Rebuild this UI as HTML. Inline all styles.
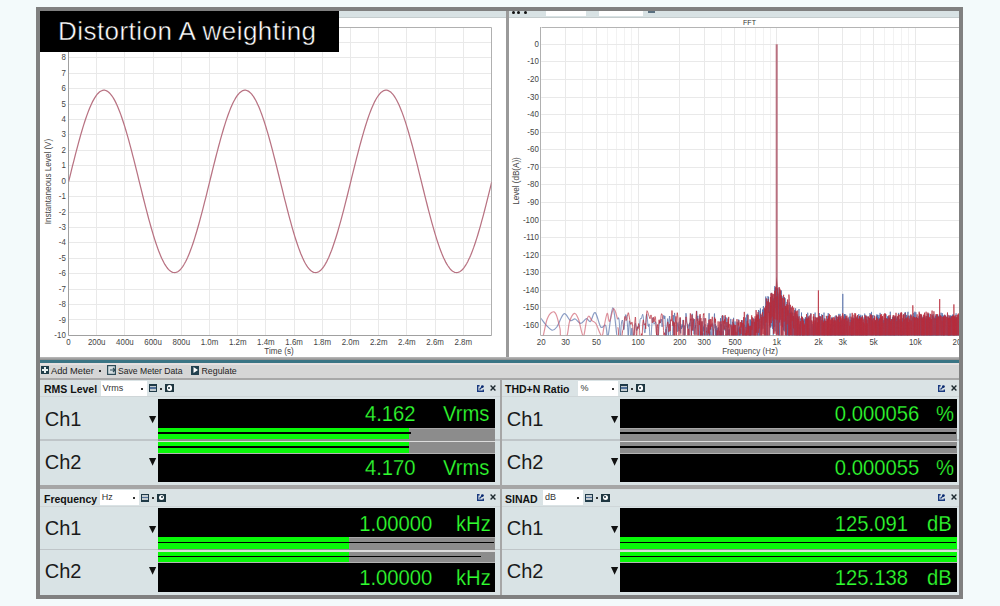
<!DOCTYPE html>
<html><head><meta charset="utf-8"><style>
html,body{margin:0;padding:0}
body{width:1000px;height:606px;position:relative;overflow:hidden;background:#f3fafb;font-family:'Liberation Sans', sans-serif}
.a{position:absolute}
</style></head><body>
<div class="a" style="left:36px;top:7px;width:927px;height:592px;background:#808080"></div>
<div class="a" style="left:40px;top:11px;width:919px;height:6px;background:#d8e2e4"></div>
<div class="a" style="left:40px;top:17px;width:919px;height:1px;background:#c4cccd"></div>
<div class="a" style="left:40px;top:18px;width:466px;height:339px;background:#fff"></div>
<div class="a" style="left:506px;top:11px;width:3px;height:346px;background:#9a9a9a"></div>
<div class="a" style="left:509px;top:18px;width:450px;height:339px;background:#fff"></div>
<div class="a" style="left:512.2px;top:10.5px;width:3px;height:3px;border-radius:50%;background:#111"></div>
<div class="a" style="left:517.2px;top:10.5px;width:3px;height:3px;border-radius:50%;background:#111"></div>
<div class="a" style="left:524px;top:10.5px;width:3px;height:3px;border-radius:50%;background:#111"></div>
<div class="a" style="left:546px;top:11px;width:40px;height:5px;background:#fff"></div>
<div class="a" style="left:598.5px;top:11px;width:44px;height:5px;background:#fff"></div>
<div class="a" style="left:648px;top:11px;width:7px;height:2px;background:#5a7080"></div>
<svg class="a" style="left:0;top:0" width="1000" height="606" viewBox="0 0 1000 606">
<defs><clipPath id="cl"><rect x="68.5" y="27.0" width="423.0" height="308.4"/></clipPath>
<clipPath id="cr"><rect x="541.2" y="27.3" width="417.79999999999995" height="308.0"/></clipPath>
<clipPath id="cpr"><rect x="509" y="18" width="450" height="339"/></clipPath></defs>
<path d="M96.5 27.0V335.4M124.5 27.0V335.4M153.5 27.0V335.4M181.5 27.0V335.4M209.5 27.0V335.4M237.5 27.0V335.4M265.5 27.0V335.4M294.5 27.0V335.4M322.5 27.0V335.4M350.5 27.0V335.4M378.5 27.0V335.4M406.5 27.0V335.4M435.5 27.0V335.4M463.5 27.0V335.4M68.5 319.5H491.5M68.5 304.5H491.5M68.5 289.5H491.5M68.5 273.5H491.5M68.5 258.5H491.5M68.5 242.5H491.5M68.5 227.5H491.5M68.5 212.5H491.5M68.5 196.5H491.5M68.5 181.5H491.5M68.5 165.5H491.5M68.5 150.5H491.5M68.5 134.5H491.5M68.5 119.5H491.5M68.5 104.5H491.5M68.5 88.5H491.5M68.5 73.5H491.5M68.5 57.5H491.5M68.5 42.5H491.5" stroke="#e9e9e9" stroke-width="1" fill="none"/><path d="M68.5 27.5H491.5V335.5" fill="none" stroke="#b0b0b0" stroke-width="1"/><path d="M68.5 27V335.5H491.5" fill="none" stroke="#a0a0a0" stroke-width="1"/><g font-family="'Liberation Sans', sans-serif" font-size="9" fill="#444"><text transform="translate(65.8 337.9) scale(0.88 1)" text-anchor="end">-10</text><text transform="translate(65.8 322.5) scale(0.88 1)" text-anchor="end">-9</text><text transform="translate(65.8 307.1) scale(0.88 1)" text-anchor="end">-8</text><text transform="translate(65.8 291.6) scale(0.88 1)" text-anchor="end">-7</text><text transform="translate(65.8 276.2) scale(0.88 1)" text-anchor="end">-6</text><text transform="translate(65.8 260.8) scale(0.88 1)" text-anchor="end">-5</text><text transform="translate(65.8 245.4) scale(0.88 1)" text-anchor="end">-4</text><text transform="translate(65.8 230) scale(0.88 1)" text-anchor="end">-3</text><text transform="translate(65.8 214.5) scale(0.88 1)" text-anchor="end">-2</text><text transform="translate(65.8 199.1) scale(0.88 1)" text-anchor="end">-1</text><text transform="translate(65.8 183.7) scale(0.88 1)" text-anchor="end">0</text><text transform="translate(65.8 168.3) scale(0.88 1)" text-anchor="end">1</text><text transform="translate(65.8 152.9) scale(0.88 1)" text-anchor="end">2</text><text transform="translate(65.8 137.4) scale(0.88 1)" text-anchor="end">3</text><text transform="translate(65.8 122) scale(0.88 1)" text-anchor="end">4</text><text transform="translate(65.8 106.6) scale(0.88 1)" text-anchor="end">5</text><text transform="translate(65.8 91.2) scale(0.88 1)" text-anchor="end">6</text><text transform="translate(65.8 75.8) scale(0.88 1)" text-anchor="end">7</text><text transform="translate(65.8 60.3) scale(0.88 1)" text-anchor="end">8</text><text transform="translate(68.5 344.9) scale(0.88 1)" text-anchor="middle">0</text><text transform="translate(96.7 344.9) scale(0.88 1)" text-anchor="middle">200u</text><text transform="translate(124.9 344.9) scale(0.88 1)" text-anchor="middle">400u</text><text transform="translate(153.1 344.9) scale(0.88 1)" text-anchor="middle">600u</text><text transform="translate(181.3 344.9) scale(0.88 1)" text-anchor="middle">800u</text><text transform="translate(209.5 344.9) scale(0.88 1)" text-anchor="middle">1.0m</text><text transform="translate(237.7 344.9) scale(0.88 1)" text-anchor="middle">1.2m</text><text transform="translate(265.9 344.9) scale(0.88 1)" text-anchor="middle">1.4m</text><text transform="translate(294.1 344.9) scale(0.88 1)" text-anchor="middle">1.6m</text><text transform="translate(322.3 344.9) scale(0.88 1)" text-anchor="middle">1.8m</text><text transform="translate(350.5 344.9) scale(0.88 1)" text-anchor="middle">2.0m</text><text transform="translate(378.7 344.9) scale(0.88 1)" text-anchor="middle">2.2m</text><text transform="translate(406.9 344.9) scale(0.88 1)" text-anchor="middle">2.4m</text><text transform="translate(435.1 344.9) scale(0.88 1)" text-anchor="middle">2.6m</text><text transform="translate(463.3 344.9) scale(0.88 1)" text-anchor="middle">2.8m</text><text transform="translate(279 353.5) scale(0.9 1)" text-anchor="middle">Time (s)</text><text transform="translate(50.8 181.5) rotate(-90) scale(0.9 1)" text-anchor="middle">Instantaneous Level (V)</text></g>
<g clip-path="url(#cl)"><polyline points="68.7,181.4 69.7,177.3 70.7,173.3 71.7,169.2 72.7,165.2 73.7,161.3 74.7,157.3 75.7,153.4 76.7,149.6 77.7,145.8 78.7,142.1 79.7,138.5 80.7,134.9 81.7,131.5 82.7,128.1 83.7,124.9 84.7,121.8 85.7,118.8 86.7,115.9 87.7,113.1 88.7,110.5 89.7,108 90.7,105.7 91.7,103.5 92.7,101.4 93.7,99.6 94.7,97.9 95.7,96.3 96.7,94.9 97.7,93.7 98.7,92.7 99.7,91.8 100.7,91.2 101.7,90.7 102.7,90.3 103.7,90.2 104.7,90.2 105.7,90.5 106.7,90.9 107.7,91.5 108.7,92.2 109.7,93.2 110.7,94.3 111.7,95.6 112.7,97 113.7,98.6 114.7,100.4 115.7,102.4 116.7,104.5 117.7,106.8 118.7,109.2 119.7,111.7 120.7,114.4 121.7,117.2 122.7,120.2 123.7,123.2 124.7,126.4 125.7,129.7 126.7,133.1 127.7,136.6 128.7,140.2 129.7,143.9 130.7,147.6 131.7,151.4 132.7,155.3 133.7,159.2 134.7,163.1 135.7,167.1 136.7,171.2 137.7,175.2 138.7,179.3 139.7,183.3 140.7,187.4 141.7,191.4 142.7,195.5 143.7,199.5 144.7,203.4 145.7,207.3 146.7,211.2 147.7,215 148.7,218.8 149.7,222.4 150.7,226 151.7,229.5 152.7,232.9 153.7,236.2 154.7,239.4 155.7,242.5 156.7,245.4 157.7,248.3 158.7,251 159.7,253.5 160.7,255.9 161.7,258.2 162.7,260.3 163.7,262.3 164.7,264.1 165.7,265.7 166.7,267.2 167.7,268.5 168.7,269.6 169.7,270.5 170.7,271.3 171.7,271.9 172.7,272.3 173.7,272.5 174.7,272.6 175.7,272.5 176.7,272.2 177.7,271.7 178.7,271 179.7,270.2 180.7,269.1 181.7,267.9 182.7,266.6 183.7,265 184.7,263.3 185.7,261.5 186.7,259.4 187.7,257.3 188.7,254.9 189.7,252.4 190.7,249.8 191.7,247.1 192.7,244.2 193.7,241.2 194.7,238.1 195.7,234.8 196.7,231.5 197.7,228 198.7,224.5 199.7,220.9 200.7,217.2 201.7,213.4 202.7,209.6 203.7,205.7 204.7,201.7 205.7,197.8 206.7,193.8 207.7,189.7 208.7,185.7 209.7,181.6 210.7,177.5 211.7,173.5 212.7,169.4 213.7,165.4 214.7,161.5 215.7,157.5 216.7,153.6 217.7,149.8 218.7,146 219.7,142.3 220.7,138.7 221.7,135.1 222.7,131.7 223.7,128.3 224.7,125.1 225.7,121.9 226.7,118.9 227.7,116 228.7,113.2 229.7,110.6 230.7,108.1 231.7,105.8 232.7,103.6 233.7,101.5 234.7,99.7 235.7,97.9 236.7,96.4 237.7,95 238.7,93.8 239.7,92.7 240.7,91.9 241.7,91.2 242.7,90.7 243.7,90.4 244.7,90.2 245.7,90.2 246.7,90.5 247.7,90.9 248.7,91.4 249.7,92.2 250.7,93.1 251.7,94.2 252.7,95.5 253.7,96.9 254.7,98.6 255.7,100.3 256.7,102.3 257.7,104.4 258.7,106.6 259.7,109 260.7,111.6 261.7,114.3 262.7,117.1 263.7,120 264.7,123.1 265.7,126.3 266.7,129.6 267.7,132.9 268.7,136.4 269.7,140 270.7,143.7 271.7,147.4 272.7,151.2 273.7,155.1 274.7,159 275.7,162.9 276.7,166.9 277.7,171 278.7,175 279.7,179.1 280.7,183.1 281.7,187.2 282.7,191.2 283.7,195.3 284.7,199.3 285.7,203.2 286.7,207.1 287.7,211 288.7,214.8 289.7,218.6 290.7,222.2 291.7,225.8 292.7,229.3 293.7,232.7 294.7,236.1 295.7,239.2 296.7,242.3 297.7,245.3 298.7,248.1 299.7,250.8 300.7,253.4 301.7,255.8 302.7,258.1 303.7,260.2 304.7,262.2 305.7,264 306.7,265.6 307.7,267.1 308.7,268.4 309.7,269.5 310.7,270.5 311.7,271.3 312.7,271.9 313.7,272.3 314.7,272.5 315.7,272.6 316.7,272.5 317.7,272.2 318.7,271.7 319.7,271 320.7,270.2 321.7,269.2 322.7,268 323.7,266.6 324.7,265.1 325.7,263.4 326.7,261.6 327.7,259.5 328.7,257.4 329.7,255 330.7,252.6 331.7,250 332.7,247.2 333.7,244.3 334.7,241.3 335.7,238.2 336.7,235 337.7,231.7 338.7,228.2 339.7,224.7 340.7,221.1 341.7,217.4 342.7,213.6 343.7,209.8 344.7,205.9 345.7,201.9 346.7,198 347.7,194 348.7,189.9 349.7,185.9 350.7,181.8 351.7,177.7 352.7,173.7 353.7,169.7 354.7,165.6 355.7,161.7 356.7,157.7 357.7,153.8 358.7,150 359.7,146.2 360.7,142.5 361.7,138.8 362.7,135.3 363.7,131.8 364.7,128.5 365.7,125.2 366.7,122.1 367.7,119 368.7,116.1 369.7,113.4 370.7,110.7 371.7,108.2 372.7,105.9 373.7,103.7 374.7,101.6 375.7,99.7 376.7,98 377.7,96.5 378.7,95.1 379.7,93.8 380.7,92.8 381.7,91.9 382.7,91.2 383.7,90.7 384.7,90.4 385.7,90.2 386.7,90.2 387.7,90.4 388.7,90.8 389.7,91.4 390.7,92.1 391.7,93.1 392.7,94.2 393.7,95.4 394.7,96.9 395.7,98.5 396.7,100.2 397.7,102.2 398.7,104.3 399.7,106.5 400.7,108.9 401.7,111.4 402.7,114.1 403.7,116.9 404.7,119.9 405.7,122.9 406.7,126.1 407.7,129.4 408.7,132.8 409.7,136.3 410.7,139.8 411.7,143.5 412.7,147.2 413.7,151 414.7,154.9 415.7,158.8 416.7,162.7 417.7,166.7 418.7,170.8 419.7,174.8 420.7,178.9 421.7,182.9 422.7,187 423.7,191 424.7,195.1 425.7,199.1 426.7,203 427.7,207 428.7,210.8 429.7,214.6 430.7,218.4 431.7,222.1 432.7,225.7 433.7,229.2 434.7,232.6 435.7,235.9 436.7,239.1 437.7,242.2 438.7,245.1 439.7,248 440.7,250.7 441.7,253.3 442.7,255.7 443.7,258 444.7,260.1 445.7,262.1 446.7,263.9 447.7,265.5 448.7,267 449.7,268.3 450.7,269.5 451.7,270.4 452.7,271.2 453.7,271.8 454.7,272.3 455.7,272.5 456.7,272.6 457.7,272.5 458.7,272.2 459.7,271.7 460.7,271.1 461.7,270.2 462.7,269.2 463.7,268.1 464.7,266.7 465.7,265.2 466.7,263.5 467.7,261.7 468.7,259.6 469.7,257.5 470.7,255.2 471.7,252.7 472.7,250.1 473.7,247.4 474.7,244.5 475.7,241.5 476.7,238.4 477.7,235.2 478.7,231.8 479.7,228.4 480.7,224.9 481.7,221.2 482.7,217.6 483.7,213.8 484.7,210 485.7,206.1 486.7,202.1 487.7,198.2 488.7,194.2 489.7,190.1 490.7,186.1 491.7,182" fill="none" stroke="#b87282" stroke-width="1.25"/></g>
<g clip-path="url(#cpr)"><path d="M582.5 27.3V335.3M607.5 27.3V335.3M616.5 27.3V335.3M624.5 27.3V335.3M631.5 27.3V335.3M721.5 27.3V335.3M745.5 27.3V335.3M755.5 27.3V335.3M763.5 27.3V335.3M770.5 27.3V335.3M860.5 27.3V335.3M884.5 27.3V335.3M893.5 27.3V335.3M901.5 27.3V335.3M908.5 27.3V335.3" stroke="#f2f2f2" stroke-width="1" fill="none"/><path d="M565.5 27.3V335.3M596.5 27.3V335.3M638.5 27.3V335.3M679.5 27.3V335.3M704.5 27.3V335.3M734.5 27.3V335.3M776.5 27.3V335.3M818.5 27.3V335.3M842.5 27.3V335.3M873.5 27.3V335.3M915.5 27.3V335.3M541.2 44.5H970M541.2 61.5H970M541.2 79.5H970M541.2 97.5H970M541.2 114.5H970M541.2 132.5H970M541.2 149.5H970M541.2 167.5H970M541.2 184.5H970M541.2 202.5H970M541.2 220.5H970M541.2 237.5H970M541.2 255.5H970M541.2 272.5H970M541.2 290.5H970M541.2 307.5H970M541.2 325.5H970" stroke="#e9e9e9" stroke-width="1" fill="none"/><path d="M541.5 27.5H970" fill="none" stroke="#b4b4b4" stroke-width="1"/><path d="M540.5 27V335.5H970" fill="none" stroke="#b0b0b0" stroke-width="1"/><g font-family="'Liberation Sans', sans-serif" font-size="9" fill="#444"><text transform="translate(538.8 46.8) scale(0.88 1)" text-anchor="end">0</text><text transform="translate(538.8 64.4) scale(0.88 1)" text-anchor="end">-10</text><text transform="translate(538.8 81.9) scale(0.88 1)" text-anchor="end">-20</text><text transform="translate(538.8 99.5) scale(0.88 1)" text-anchor="end">-30</text><text transform="translate(538.8 117.1) scale(0.88 1)" text-anchor="end">-40</text><text transform="translate(538.8 134.7) scale(0.88 1)" text-anchor="end">-50</text><text transform="translate(538.8 152.2) scale(0.88 1)" text-anchor="end">-60</text><text transform="translate(538.8 169.8) scale(0.88 1)" text-anchor="end">-70</text><text transform="translate(538.8 187.4) scale(0.88 1)" text-anchor="end">-80</text><text transform="translate(538.8 205) scale(0.88 1)" text-anchor="end">-90</text><text transform="translate(538.8 222.6) scale(0.88 1)" text-anchor="end">-100</text><text transform="translate(538.8 240.1) scale(0.88 1)" text-anchor="end">-110</text><text transform="translate(538.8 257.7) scale(0.88 1)" text-anchor="end">-120</text><text transform="translate(538.8 275.3) scale(0.88 1)" text-anchor="end">-130</text><text transform="translate(538.8 292.9) scale(0.88 1)" text-anchor="end">-140</text><text transform="translate(538.8 310.4) scale(0.88 1)" text-anchor="end">-150</text><text transform="translate(538.8 328) scale(0.88 1)" text-anchor="end">-160</text><text transform="translate(541.2 344.9) scale(0.88 1)" text-anchor="middle">20</text><text transform="translate(565.6 344.9) scale(0.88 1)" text-anchor="middle">30</text><text transform="translate(596.4 344.9) scale(0.88 1)" text-anchor="middle">50</text><text transform="translate(638.1 344.9) scale(0.88 1)" text-anchor="middle">100</text><text transform="translate(679.8 344.9) scale(0.88 1)" text-anchor="middle">200</text><text transform="translate(704.2 344.9) scale(0.88 1)" text-anchor="middle">300</text><text transform="translate(735 344.9) scale(0.88 1)" text-anchor="middle">500</text><text transform="translate(776.7 344.9) scale(0.88 1)" text-anchor="middle">1k</text><text transform="translate(818.4 344.9) scale(0.88 1)" text-anchor="middle">2k</text><text transform="translate(842.8 344.9) scale(0.88 1)" text-anchor="middle">3k</text><text transform="translate(873.6 344.9) scale(0.88 1)" text-anchor="middle">5k</text><text transform="translate(915.3 344.9) scale(0.88 1)" text-anchor="middle">10k</text><text transform="translate(957 344.9) scale(0.88 1)" text-anchor="middle">20</text><text transform="translate(750 353.5) scale(0.9 1)" text-anchor="middle">Frequency (Hz)</text><text transform="translate(518.5 181) rotate(-90) scale(0.9 1)" text-anchor="middle">Level (dB(A))</text><text x="749.5" y="24.5" text-anchor="middle" font-size="7" fill="#333">FFT</text></g>
<g clip-path="url(#cr)"><path d="M776.7 44.3V335.3" stroke="#b8707f" stroke-width="2"/><path d="M773.7 307.9L776.7 276.3L779.7 307.9Z" fill="#a83444" fill-opacity="0.75"/><path d="M540.8 318.2C541.7 319.4 544.5 323.4 546.4 325.4C548.3 327.4 550.3 329.9 552.0 330.2C553.7 330.5 554.8 329.7 556.8 327.0C558.8 324.3 561.7 314.9 564.0 313.8C566.3 312.7 568.5 319.7 570.4 320.6C572.3 321.5 573.5 318.5 575.2 319.0C576.9 319.5 578.9 323.5 580.8 323.4C582.7 323.3 584.8 318.9 586.4 318.6C588.0 318.3 588.9 322.4 590.4 321.4C591.9 320.4 593.5 311.7 595.2 312.6C596.9 313.5 599.1 324.9 600.8 327.0C602.5 329.1 604.4 323.9 605.6 325.4C606.8 326.9 606.8 338.9 608.0 336.0C609.2 333.1 611.3 308.0 612.8 307.8C614.3 307.6 616.1 330.5 616.8 335.0" fill="none" stroke="#5a74ac" stroke-width="1.2" stroke-opacity="0.7"/><polyline points="617.9,319.6 618.3,317.8 618.7,317.8 619.1,320.0 619.5,325.5 620.4,340.0 620.8,332.9 621.2,325.6 621.6,321.9 622.3,320.1 622.7,321.4 623.1,324.5 623.5,329.6 624.3,329.4 624.6,322.9 625.0,318.0 625.8,314.6 626.1,315.2 626.9,318.9 627.2,322.1 627.6,327.2 628.3,338.7 628.6,329.0 629.3,320.9 629.7,321.6 630.0,324.9 630.7,340.0 631.1,340.0 631.7,328.4 632.1,328.2 632.7,340.0 633.1,340.0 633.7,336.1 634.0,335.5 634.7,328.2 635.3,323.2 635.6,323.3 636.2,327.3 636.6,330.6 637.2,330.3 637.8,326.6 638.1,326.3 638.7,327.5 639.3,327.2 639.6,324.8 640.1,319.7 640.7,318.3 641.0,318.8 641.6,318.3 642.1,315.8 642.7,314.3 643.3,316.9 643.5,320.1 644.1,329.0 644.6,332.7 645.2,332.6 645.7,322.7 646.2,315.9 646.8,314.2 647.0,315.2 647.5,319.9 648.0,326.1 648.5,326.5 649.1,323.8 649.6,331.9 650.0,340.0 650.5,340.0 651.0,339.2 651.5,329.9 652.0,322.9 652.2,320.2 652.7,317.9 653.2,319.0 653.6,322.5 654.1,324.3 654.6,323.3 655.0,322.2 655.5,321.9 655.7,322.0 656.1,323.5 656.6,330.6 657.0,336.7 657.5,334.8 657.7,336.4 658.1,340.0 658.5,335.5 659.0,328.0 659.2,325.0 659.6,320.8 660.0,321.2 660.4,323.0 660.7,322.1 661.1,319.0 661.5,320.0 661.7,322.3 662.1,326.9 662.5,322.5 662.7,320.0 663.1,317.2 663.5,315.4 663.7,315.5 664.1,319.0 664.5,318.3 664.7,315.8 665.0,316.3 665.4,328.2 665.6,336.2 666.0,329.6 666.2,329.1 666.6,335.6 666.9,333.2 667.1,326.2 667.5,319.4 667.7,318.6 668.0,321.4 668.4,332.9 668.6,340.0 668.9,326.6 669.1,321.1 669.5,316.2 669.7,316.0 670.0,319.4 670.4,329.0 670.5,335.2 670.9,335.7 671.1,335.2 671.4,340.0 671.6,340.0 671.9,340.0 672.1,337.5 672.4,338.6 672.6,333.6 673.0,318.1 673.1,315.0 673.5,316.0 673.6,321.2 674.0,340.0 674.1,323.5 674.5,313.7 674.6,312.9 674.9,315.7 675.1,317.9 675.4,320.0 675.6,320.6 675.9,321.8 676.1,322.6 676.4,322.4 676.6,322.4 676.9,327.1 677.2,331.8 677.5,326.2 677.7,323.6 678.0,322.5 678.1,323.6 678.4,327.2 678.6,327.8 678.9,329.8 679.0,331.2 679.5,323.5 679.6,321.0 680.0,318.0 680.1,318.0 680.4,322.6 680.7,333.4 681.0,327.5 681.1,325.8 681.4,327.1 681.6,329.0 681.9,326.1 682.0,324.3 682.4,327.4 682.6,324.4 682.9,320.0 683.0,319.9 683.4,325.3 683.6,331.7 683.9,340.0 684.0,336.9 684.4,325.5 684.6,327.1 685.0,340.0 685.1,340.0 685.4,323.9 685.5,318.8 685.9,313.2 686.1,313.5 686.5,316.5 686.6,318.2 686.9,321.9 687.0,324.0 687.4,327.5 687.6,328.4 688.0,325.2 688.1,324.4 688.5,325.0 688.6,325.2 689.0,335.1 689.1,332.5 689.4,323.7 689.5,322.8 689.9,326.2 690.0,324.2 690.4,318.8 690.5,319.0 690.9,324.5 691.0,328.2 691.4,340.0 691.5,332.5 691.9,316.9 692.0,315.1 692.3,313.8 692.5,315.4 693.0,330.9 693.1,328.0 693.5,320.1 693.6,321.0 693.9,334.4 694.1,332.9 694.4,319.1 694.5,319.0 694.9,323.0 695.0,325.1 695.2,328.3 695.6,325.3 695.9,332.4 696.1,334.7 696.4,315.2 696.7,310.9 697.0,313.5 697.1,315.8 697.3,320.8 697.8,315.8 698.0,319.4 698.1,324.5 698.3,330.9 698.9,330.8 699.0,332.9 699.2,340.0 699.4,327.0 699.5,321.6 699.9,315.5 700.1,316.6 700.5,340.0 700.8,331.4 700.9,336.3 701.1,340.0 701.4,328.2 701.5,325.8 701.9,321.6 702.1,322.9 702.5,340.0 702.6,340.0 702.9,332.9 703.2,340.0 703.5,326.5 703.7,331.3 703.9,324.5 704.1,318.1 704.4,327.9 704.6,340.0 704.9,328.1 705.1,324.1 705.5,334.0 705.6,339.4 706.0,340.0 706.1,340.0 706.5,328.9 706.6,327.4 707.0,329.6 707.0,330.2 707.4,340.0 707.5,340.0 708.0,323.2 708.1,324.5 708.5,336.7 708.6,336.8 708.9,316.4 709.1,313.2 709.5,327.2 709.7,339.6 709.9,331.7 710.0,335.2 710.4,325.5 710.7,329.8 710.9,324.6 711.0,324.3 711.5,340.0 711.6,340.0 711.9,337.3 712.0,334.3 712.4,323.5 712.9,325.1 713.0,327.5 713.1,340.0 713.4,329.3 713.7,340.0 714.0,322.5 714.1,319.7 714.4,313.9 714.5,313.5 714.9,326.2 715.0,328.4 715.3,324.1 715.6,340.0 715.8,328.9 716.1,340.0 716.3,325.9 716.5,332.6 716.7,340.0 717.1,330.6 717.2,327.8 717.6,330.4 718.0,340.0 718.1,340.0 718.4,327.3 718.5,328.1 719.0,340.0 719.2,340.0 719.5,333.6 719.5,330.8 719.9,340.0 720.1,334.3 720.5,318.2 720.5,318.4 720.9,340.0 721.1,324.1 721.4,340.0 721.5,340.0 722.0,315.8 722.0,317.0 722.5,333.7 722.6,333.9 722.8,338.2 723.2,331.3 723.4,339.4 723.5,340.0 723.9,315.7 724.0,318.2 724.4,329.6 724.5,328.7 724.7,326.4 725.2,330.8 725.5,322.3 725.7,317.1 725.9,326.0 726.1,340.0 726.4,326.0 726.5,326.7 726.8,317.7 727.3,324.3 727.5,328.0 727.7,340.0 727.9,325.2 728.1,322.1 728.5,335.0 728.8,329.7 728.9,334.8 729.1,340.0 729.4,329.4 729.6,340.0 729.9,330.5 730.0,329.7 730.2,327.3 730.5,327.1 730.8,318.9 731.0,323.2 731.2,328.9 731.7,335.9 732.0,327.2 732.2,340.0 732.4,321.8 732.6,323.6 733.0,339.1 733.1,340.0 733.5,317.8 733.6,318.3 734.0,333.4 734.1,338.0 734.3,325.2 734.6,340.0 735.0,321.9 735.1,321.5 735.5,330.8 735.6,336.2 735.7,340.0 736.1,335.4 736.5,340.0 736.6,340.0 736.9,324.4 737.2,321.8 737.5,333.6 737.7,340.0 737.9,328.4 738.3,340.0 738.5,323.8 738.7,319.4 739.0,336.0 739.0,340.0 739.3,327.2 739.5,340.0 739.8,326.5 740.2,340.0 740.4,329.1 740.7,329.5 740.9,340.0 741.2,340.0 741.4,320.3 741.5,324.3 741.6,333.8 742.0,333.4 742.2,340.0 742.5,338.6 742.8,320.2 743.1,340.0 743.4,323.6 743.6,337.1 743.9,324.7 744.3,324.7 744.5,330.6 744.7,340.0 744.9,329.5 745.1,340.0 745.5,318.3 745.6,317.6 746.0,328.1 746.3,325.6 746.4,336.2 746.7,314.7 747.0,327.0 747.1,338.5 747.3,324.2 747.5,324.6 747.7,313.8 748.0,322.2 748.2,327.5 748.6,340.0 748.8,325.6 749.0,340.0 749.4,326.4 749.6,339.8 749.9,319.3 750.2,340.0 750.5,319.7 750.5,320.4 750.7,337.2 751.3,335.9 751.5,325.4 751.6,321.4 751.8,340.0 752.1,340.0 752.5,322.9 752.5,321.8 752.9,340.0 753.0,324.0 753.2,317.9 753.5,323.0 754.0,340.0 754.3,340.0 754.5,327.3 754.5,325.8 754.9,318.8 755.0,325.9 755.2,340.0 755.7,340.0 755.9,326.8 756.2,319.5 756.5,332.4 756.5,332.9 756.8,315.8 757.2,337.4 757.3,314.7 757.7,321.7 757.9,340.0 758.2,340.0 758.5,310.0 758.5,311.6 758.9,340.0 759.3,318.4 759.5,340.0 759.5,336.9 759.9,310.7 760.2,318.4 760.4,308.3 760.5,312.2 760.9,340.0 761.0,335.4 761.5,316.1 761.6,315.1 761.8,329.5 762.3,320.4 762.5,309.9 762.5,309.5 762.9,324.5 763.1,328.6 763.4,306.0 763.8,325.4 764.0,309.8 764.0,309.5 764.5,316.1 764.6,340.0 765.0,309.0 765.3,317.8 765.5,301.3 765.8,296.5 766.0,306.3 766.0,311.1 766.3,340.0 766.5,336.2 766.8,298.9 767.0,300.2 767.4,337.5 767.7,327.6 768.0,296.1 768.0,296.6 768.4,312.9 768.6,297.1 769.0,312.7 769.3,323.0 769.5,302.9 769.5,304.3 769.6,339.2 770.2,318.2 770.4,305.8 770.8,327.6 771.0,303.1 771.2,318.0 771.4,292.9 771.8,296.3 772.0,326.3 772.2,295.8 772.4,323.2 772.7,329.0 772.9,298.4 773.3,338.0 773.4,298.6 773.7,331.7 773.8,299.8 774.1,294.6 774.3,311.6 774.6,326.9 774.8,286.1 775.1,331.4 775.2,287.9 775.5,305.5 775.7,292.5 776.1,312.5 776.2,296.0 776.7,289.3 776.9,322.8 777.1,299.6 777.3,329.7 777.5,334.2 777.8,293.9 778.2,314.2 778.3,300.0 778.7,335.7 779.0,287.6 779.0,287.5 779.5,336.1 779.6,338.1 780.0,294.5 780.0,291.8 780.2,319.4 780.8,296.1 781.0,308.8 781.1,325.4 781.3,290.4 781.8,297.6 782.0,318.8 782.1,340.0 782.2,296.4 782.6,312.2 782.7,298.4 783.0,305.1 783.4,330.1 783.8,302.7 783.9,330.7 784.4,320.8 784.5,297.1 784.5,297.4 784.9,331.5 785.1,298.2 785.3,334.8 785.7,307.7 785.8,340.0 786.2,308.1 786.4,339.4 786.6,339.1 786.9,301.9 787.3,308.3 787.4,335.0 787.6,310.0 787.8,340.0 788.1,312.5 788.4,340.0 788.6,310.5 788.7,335.4 789.2,337.0 789.4,302.5 789.5,340.0 789.7,308.3 790.2,340.0 790.4,312.2 790.7,329.5 790.9,309.9 791.2,307.3 791.3,322.4 791.5,311.6 791.7,340.0 792.2,312.7 792.4,340.0 792.7,322.2 792.8,312.7 793.0,316.2 793.1,336.5 793.5,316.0 793.8,340.0 794.3,340.0 794.5,310.7 794.5,310.1 794.7,340.0 795.2,340.0 795.5,315.8 795.6,308.3 796.0,340.0 796.1,318.1 796.3,330.6 796.7,340.0 796.9,314.1 797.1,340.0 797.3,322.3 797.7,315.7 797.8,331.3 798.1,317.0 798.3,340.0 798.8,340.0 799.0,309.0 799.0,313.7 799.3,338.4 799.5,324.2 799.8,340.0 800.3,323.5 800.3,340.0 800.6,318.4 800.8,340.0 801.1,340.0 801.5,312.5 801.5,315.0 801.6,340.0 802.1,340.0 802.3,316.8 802.7,340.0 802.7,323.2 803.1,340.0 803.3,318.6 803.7,340.0 803.9,320.6 804.0,340.0 804.1,323.6 804.7,318.8 804.9,337.8 805.0,338.0 805.4,317.0 805.7,340.0 805.8,318.0 806.2,323.1 806.3,340.0 806.6,318.1 806.7,337.2 807.0,337.8 807.5,318.5 807.6,337.8 807.7,312.7 808.0,320.1 808.5,340.0 808.5,340.0 808.7,316.5 809.0,340.0 809.3,320.3 809.6,340.0 809.7,327.9 810.0,340.0 810.1,317.1 810.8,313.2 810.9,340.0 811.4,320.8 811.5,340.0 811.8,340.0 812.0,325.0 812.2,324.0 812.3,340.0 812.8,340.0 812.9,326.3 813.0,340.0 813.3,316.8 813.8,321.4 814.0,340.0 814.0,340.0 814.4,323.5 814.5,340.0 814.9,320.9 815.1,312.6 815.4,340.0 815.5,320.6 815.6,340.0 816.1,340.0 816.3,327.5 816.9,326.3 816.9,340.0 817.2,317.6 817.2,340.0 817.7,322.4 817.9,340.0 818.1,340.0 818.4,317.7 818.6,316.7 818.8,340.0 819.2,313.0 819.4,340.0 819.6,340.0 819.9,316.9 820.3,340.0 820.4,318.5 820.7,316.4 820.7,340.0 821.4,340.0 821.5,321.9 821.7,314.3 821.9,340.0 822.1,340.0 822.5,320.0 822.5,315.2 822.7,340.0 823.2,340.0 823.4,320.4 823.9,340.0 824.0,312.6 824.0,315.1 824.0,340.0 824.8,320.4 824.9,340.0 825.1,318.6 825.3,340.0 825.5,340.0 826.0,321.0 826.0,322.0 826.0,340.0 826.7,340.0 826.7,322.1 827.3,321.2 827.3,340.0 827.7,315.8 828.0,340.0 828.1,340.0 828.2,313.1 828.5,318.0 828.7,340.0 829.2,340.0 829.3,317.2 829.7,340.0 830.0,330.1 830.0,340.0 830.4,323.8 830.5,325.5 830.9,340.0 831.4,317.9 831.5,340.0 831.5,340.0 831.6,322.3 832.0,316.9 832.3,340.0 832.7,318.5 832.9,340.0 833.0,340.0 833.4,321.0 833.6,320.1 833.8,340.0 834.3,340.0 834.5,319.7 834.8,338.8 835.0,316.2 835.4,315.7 835.4,340.0 835.5,340.0 835.8,323.0 836.1,340.0 836.4,315.6 836.5,319.9 837.0,340.0 837.2,340.0 837.5,316.9 837.6,318.4 838.0,340.0 838.4,340.0 838.5,319.6 838.6,337.5 838.8,313.9 839.2,340.0 839.3,317.4 839.8,340.0 839.9,320.3 840.1,313.9 840.3,340.0 840.5,320.3 841.0,340.0 841.2,340.0 841.4,320.2 841.7,340.0 842.0,322.0 842.2,340.0 842.3,317.5 842.5,340.0 842.8,293.9 843.0,340.0 843.2,317.2 843.8,340.0 843.9,323.3 844.2,340.0 844.4,314.0 844.7,340.0 844.7,314.1 845.1,340.0 845.5,321.6 845.7,314.4 845.8,340.0 846.1,340.0 846.3,317.9 846.5,326.0 846.9,340.0 847.0,317.6 847.4,340.0 847.6,340.0 847.7,321.3 848.1,319.3 848.2,340.0 848.5,340.0 848.7,320.5 849.3,316.6 849.3,340.0 849.9,340.0 850.0,321.6 850.1,313.5 850.5,340.0 850.7,319.8 850.9,340.0 851.3,340.0 851.5,317.7 851.9,318.3 852.0,340.0 852.0,320.5 852.1,340.0 852.8,318.1 853.0,340.0 853.2,317.5 853.5,340.0 853.6,340.0 853.8,319.5 854.2,324.6 854.4,340.0 854.6,340.0 854.8,315.4 855.3,319.2 855.3,340.0 855.5,340.0 855.6,319.4 856.0,340.0 856.1,324.3 856.8,317.1 856.9,340.0 857.2,340.0 857.4,318.4 857.5,319.0 857.7,340.0 858.0,340.0 858.5,320.6 858.8,314.0 858.9,340.0 859.0,340.0 859.1,319.5 859.6,340.0 859.7,315.8 860.2,340.0 860.4,315.9 860.7,340.0 860.8,314.8 861.2,317.2 861.4,340.0 861.6,319.5 861.9,340.0 862.0,340.0 862.5,315.4 862.5,316.9 862.6,340.0 863.1,323.4 863.2,340.0 863.6,340.0 863.9,317.5 864.1,319.6 864.2,340.0 864.6,340.0 864.7,313.6 865.3,317.1 865.3,340.0 865.5,340.0 865.9,321.5 866.1,318.8 866.4,340.0 866.6,315.6 866.7,340.0 867.1,320.3 867.5,340.0 867.6,340.0 867.9,317.0 868.2,316.9 868.4,340.0 868.9,340.0 868.9,318.0 869.2,319.4 869.3,340.0 869.7,340.0 869.9,313.0 870.1,313.4 870.2,340.0 870.8,340.0 870.9,318.3 871.2,340.0 871.5,311.9 871.5,312.5 871.8,340.0 872.3,315.6 872.5,340.0 872.5,340.0 872.8,321.5 873.1,315.0 873.3,340.0 873.7,321.8 873.8,340.0 874.1,340.0 874.5,318.1 874.9,319.1 875.0,340.0 875.2,340.0 875.5,320.3 875.7,340.0 875.9,320.9 876.1,340.0 876.3,315.9 876.9,314.4 876.9,340.0 877.2,316.4 877.3,340.0 877.5,314.9 877.6,340.0 878.0,340.0 878.3,317.3 878.6,340.0 878.9,314.9 879.1,340.0 879.2,319.2 879.7,320.0 879.8,340.0 880.1,312.9 880.3,340.0 880.6,340.0 880.7,317.2 881.3,317.9 881.5,340.0 881.5,340.0 881.7,318.1 882.3,322.9 882.3,340.0 882.7,317.3 882.8,340.0 883.2,340.0 883.4,320.5 883.8,340.0 883.9,319.8 884.3,340.0 884.4,318.0 884.8,321.2 884.9,340.0 885.0,320.3 885.3,340.0 885.5,340.0 886.0,314.3 886.0,319.3 886.4,340.0 886.6,319.1 886.7,340.0 887.1,318.6 887.2,340.0 887.6,316.6 888.0,340.0 888.1,316.0 888.5,340.0 889.0,317.2 889.0,340.0 889.0,340.0 889.4,318.4 889.6,318.3 889.8,340.0 890.3,311.7 890.3,340.0 890.7,319.4 890.9,340.0 891.2,323.0 891.4,340.0 892.0,319.2 892.0,340.0 892.2,340.0 892.4,317.3 892.5,340.0 892.8,319.1 893.2,316.6 893.4,340.0 893.7,316.6 893.9,340.0 894.0,317.3 894.4,340.0 894.6,319.2 894.7,340.0 895.2,316.4 895.3,340.0 895.6,315.7 895.8,340.0 896.2,319.1 896.3,340.0 896.8,317.5 896.8,340.0 897.3,340.0 897.5,320.4 897.5,316.9 897.8,340.0 898.4,320.0 898.5,340.0 898.7,312.9 898.9,340.0 899.1,320.1 899.3,340.0 899.8,340.0 900.0,318.8 900.2,321.6 900.4,340.0 900.6,340.0 900.7,321.6 901.0,340.0 901.2,313.7 901.6,321.2 901.7,340.0 902.0,318.6 902.3,340.0 902.9,317.9 902.9,340.0 903.0,340.0 903.5,314.1 903.7,315.1 903.9,340.0 904.2,340.0 904.2,319.1 904.7,340.0 904.8,314.6 905.2,312.1 905.2,340.0 905.5,312.7 905.7,340.0 906.1,340.0 906.5,314.9 906.5,318.0 906.9,340.0 907.3,318.9 907.5,340.0 907.6,340.0 907.7,315.8 908.0,311.8 908.2,340.0 908.6,340.0 908.9,315.8 909.3,318.7 909.4,340.0 909.7,340.0 909.8,318.8 910.1,315.7 910.4,340.0 910.9,340.0 911.0,320.2 911.0,340.0 911.4,315.9 911.7,314.7 911.7,340.0 912.0,340.0 912.4,318.3 912.6,317.6 912.8,340.0 913.1,340.0 913.5,316.2 913.6,340.0 913.7,312.9 914.1,316.4 914.4,340.0 914.8,311.7 914.8,340.0 915.0,340.0 915.3,317.9 915.6,340.0 915.9,312.3 916.1,340.0 916.5,319.9 916.5,316.9 917.0,340.0 917.2,340.0 917.3,317.9 917.7,340.0 917.8,318.6 918.3,340.0 918.3,317.5 918.8,316.4 918.8,340.0 919.2,340.0 919.4,315.5 919.5,340.0 919.6,319.3 920.0,340.0 920.2,314.3 920.5,340.0 920.9,318.1 921.1,340.0 921.3,315.1 921.5,340.0 921.6,317.8 922.3,316.7 922.4,340.0 922.9,340.0 923.0,317.6 923.4,340.0 923.5,318.8 923.7,317.2 923.9,340.0 924.3,340.0 924.3,315.6 924.5,340.0 925.0,317.0 925.0,340.0 925.3,318.2 925.8,340.0 925.9,319.8 926.2,340.0 926.4,316.0 926.6,317.9 926.6,340.0 927.2,340.0 927.4,313.7 927.5,316.9 927.9,340.0 928.1,318.5 928.1,340.0 928.7,316.2 928.9,340.0 929.0,313.5 929.4,340.0 929.6,318.8 929.6,340.0 930.0,319.7 930.2,340.0 930.9,340.0 931.0,319.1 931.0,340.0 931.3,319.3 931.6,340.0 931.8,314.6 932.1,318.9 932.2,340.0 932.7,315.9 932.8,340.0 933.1,314.0 933.3,340.0 933.9,316.7 933.9,340.0 934.2,317.9 934.4,340.0 934.6,340.0 935.0,317.7 935.4,340.0 935.5,315.9 935.7,340.0 935.9,314.3 936.0,340.0 936.1,317.5 936.6,340.0 937.0,315.5 937.3,340.0 937.3,315.3 937.6,316.4 938.0,340.0 938.3,316.5 938.3,340.0 938.8,340.0 938.8,318.2 939.2,314.6 939.4,340.0 939.8,315.9 940.0,340.0 940.1,340.0 940.4,315.9 940.6,318.6 940.8,340.0 941.0,312.7 941.5,340.0 941.7,340.0 942.0,315.3 942.2,340.0 942.2,313.1 942.7,316.5 943.0,340.0 943.2,317.6 943.3,340.0 943.8,340.0 943.8,315.3 944.2,340.0 944.3,319.0 944.5,340.0 944.6,317.4 945.3,315.1 945.4,340.0 945.6,340.0 945.9,316.3 946.1,318.1 946.4,340.0 946.7,340.0 947.0,319.4 947.2,340.0 947.3,317.2 947.5,340.0 947.7,317.8 948.0,314.8 948.2,340.0 948.6,340.0 948.8,318.5 949.1,340.0 949.3,316.3 949.7,316.5 949.8,340.0 950.2,315.4 950.3,340.0 950.7,316.0 950.9,340.0 951.0,315.6 951.5,340.0 951.6,316.6 951.6,340.0 952.3,340.0 952.4,315.0 952.8,315.8 953.0,340.0 953.0,314.2 953.1,340.0 953.6,340.0 953.9,319.8 954.2,340.0 954.5,316.8 954.6,340.0 954.9,318.6 955.1,316.6 955.2,340.0 955.8,340.0 955.8,316.0 956.1,313.4 956.4,340.0 956.6,340.0 956.6,317.8 957.3,340.0 957.4,317.4 957.5,318.6 957.8,340.0 958.0,340.0 958.4,315.1 958.5,319.4 959.0,340.0 959.1,340.0 959.3,317.9 959.8,319.7 959.9,340.0" fill="none" stroke="#4d68a6" stroke-width="0.9" stroke-opacity="0.75"/><path d="M543.2 336.0C543.9 333.2 545.7 323.0 547.2 319.0C548.7 315.0 550.5 313.0 552.0 312.2C553.5 311.4 554.7 311.5 556.0 314.2C557.3 316.9 559.2 325.0 560.0 328.6C560.8 332.2 559.7 334.8 560.8 336.0C561.9 337.2 565.3 338.4 566.8 336.0C568.3 333.6 568.3 325.2 569.6 321.4C570.9 317.6 572.9 313.8 574.4 313.4C575.9 313.0 576.9 315.2 578.4 319.0C579.9 322.8 581.9 335.6 583.2 336.0C584.5 336.4 585.5 324.7 586.4 321.4C587.3 318.1 587.9 316.3 588.8 316.2C589.7 316.1 590.8 319.3 592.0 320.6C593.2 321.9 594.4 321.2 596.0 323.8C597.6 326.4 600.3 335.5 601.6 336.0C602.9 336.5 603.1 330.8 604.0 327.0C604.9 323.2 606.3 314.3 607.2 313.4C608.1 312.5 608.5 322.2 609.6 321.4C610.7 320.6 612.3 309.0 613.6 308.6C614.9 308.2 616.9 317.3 617.6 319.0" fill="none" stroke="#cc5868" stroke-width="1.2" stroke-opacity="0.65"/><polyline points="617.9,327.3 618.3,330.0 618.7,336.8 619.1,340.0 619.5,340.0 620.4,336.9 620.8,338.8 621.2,340.0 621.6,340.0 622.3,333.2 622.7,330.5 623.1,329.6 623.5,328.2 624.3,320.6 624.6,317.6 625.0,316.4 625.8,318.9 626.1,320.6 626.9,319.1 627.2,316.8 627.6,314.7 628.3,312.7 628.6,313.3 629.3,317.1 629.7,319.4 630.0,321.5 630.7,324.3 631.1,324.4 631.7,322.4 632.1,322.1 632.7,326.2 633.1,329.7 633.7,339.1 634.0,340.0 634.7,323.2 635.3,317.1 635.6,318.2 636.2,333.3 636.6,340.0 637.2,326.8 637.8,327.9 638.1,328.7 638.7,323.5 639.3,326.4 639.6,330.8 640.1,340.0 640.7,340.0 641.0,338.5 641.6,333.6 642.1,339.4 642.7,323.3 643.3,319.8 643.5,321.0 644.1,325.0 644.6,324.6 645.2,323.4 645.7,328.9 646.2,319.8 646.8,311.6 647.0,310.7 647.5,311.4 648.0,312.9 648.5,314.6 649.1,316.2 649.6,317.9 650.0,318.8 650.5,316.6 651.0,314.9 651.5,317.3 652.0,320.9 652.2,322.9 652.7,322.3 653.2,317.1 653.6,318.0 654.1,321.9 654.6,319.1 655.0,316.5 655.5,317.6 655.7,320.6 656.1,331.1 656.6,335.0 657.0,326.7 657.5,324.5 657.7,328.5 658.1,340.0 658.5,326.8 659.0,319.9 659.2,319.7 659.6,323.2 660.0,323.3 660.4,321.8 660.7,320.0 661.1,315.5 661.5,313.8 661.7,313.7 662.1,314.4 662.5,316.5 662.7,318.1 663.1,323.0 663.5,330.4 663.7,334.6 664.1,335.1 664.5,332.7 664.7,334.8 665.0,339.0 665.4,340.0 665.6,340.0 666.0,333.1 666.2,329.4 666.6,327.3 666.9,327.4 667.1,326.7 667.5,322.7 667.7,321.8 668.0,322.7 668.4,326.1 668.6,328.4 668.9,332.1 669.1,330.4 669.5,324.6 669.7,323.9 670.0,331.0 670.4,327.1 670.5,322.0 670.9,319.5 671.1,321.2 671.4,320.1 671.6,315.7 671.9,310.5 672.1,310.9 672.4,317.5 672.6,324.5 673.0,325.9 673.1,321.3 673.5,321.6 673.6,327.3 674.0,337.9 674.1,328.7 674.5,322.5 674.6,323.3 674.9,335.7 675.1,340.0 675.4,324.4 675.6,319.2 675.9,316.4 676.1,318.1 676.4,331.8 676.6,339.8 676.9,318.0 677.0,314.3 677.3,312.7 677.7,315.1 678.0,318.6 678.1,320.3 678.4,325.2 678.6,328.9 678.9,337.0 679.0,335.8 679.5,329.8 679.6,326.8 680.0,319.1 680.1,317.2 680.4,319.1 680.5,322.2 681.0,340.0 681.1,339.7 681.4,336.6 681.6,335.9 681.9,338.1 682.0,338.5 682.4,340.0 682.6,338.7 682.9,332.0 683.0,327.7 683.4,320.1 683.6,320.3 683.9,325.2 684.0,330.1 684.3,340.0 684.6,337.7 684.7,336.3 685.1,333.7 685.4,325.2 685.5,322.5 685.9,317.2 686.1,316.8 686.5,320.9 686.6,322.0 686.9,323.5 687.2,323.6 687.4,325.3 687.6,328.1 687.8,337.3 688.1,331.2 688.3,328.8 688.6,335.5 688.9,340.0 689.1,340.0 689.4,337.5 689.6,339.2 689.9,326.1 690.0,319.3 690.3,313.4 690.5,315.1 690.8,320.3 691.0,318.8 691.4,332.3 691.5,340.0 691.9,316.1 692.0,314.7 692.4,321.7 692.7,330.3 693.0,324.9 693.1,322.2 693.4,318.5 693.6,320.9 693.9,326.8 694.1,327.3 694.4,329.2 694.5,331.1 694.9,340.0 695.0,340.0 695.5,323.0 695.6,322.2 695.9,318.7 696.1,316.3 696.4,311.1 696.5,311.2 697.0,326.3 697.2,336.5 697.4,324.6 697.5,321.8 697.9,318.6 698.1,320.9 698.4,334.1 698.5,340.0 699.0,320.8 699.1,321.7 699.3,325.0 699.5,323.0 699.9,315.5 700.1,314.1 700.5,330.2 700.6,340.0 700.9,319.7 701.0,318.2 701.4,340.0 701.5,334.4 702.0,321.3 702.1,321.8 702.5,340.0 702.6,337.9 703.0,320.4 703.1,317.5 703.4,314.1 703.6,314.7 703.9,313.3 704.0,314.0 704.4,328.1 704.7,340.0 704.9,330.0 705.0,324.5 705.5,318.7 705.7,318.2 706.0,321.6 706.1,325.2 706.3,332.3 706.6,331.2 707.0,339.0 707.1,340.0 707.4,333.2 707.5,329.7 708.0,325.7 708.1,324.7 708.5,333.5 708.6,331.5 708.9,319.8 709.0,319.8 709.5,339.0 709.7,340.0 709.9,322.1 710.1,319.0 710.5,329.3 710.6,328.6 710.9,319.5 711.0,319.2 711.5,325.4 711.7,326.7 711.9,322.8 712.3,316.8 712.4,321.5 712.5,326.2 713.0,331.3 713.2,340.0 713.5,331.7 713.7,330.2 714.0,324.8 714.1,324.0 714.4,319.6 714.6,317.4 714.9,321.4 715.1,322.6 715.4,318.9 715.5,318.8 715.9,330.0 716.0,331.1 716.3,340.0 716.5,335.7 716.8,339.6 717.2,330.2 717.5,340.0 717.6,340.0 718.0,322.9 718.1,321.4 718.4,325.9 718.5,328.6 719.0,340.0 719.1,340.0 719.5,327.9 719.8,321.6 720.0,327.3 720.1,331.5 720.5,340.0 720.5,340.0 721.0,321.6 721.1,321.3 721.4,340.0 721.5,340.0 722.0,325.9 722.2,324.8 722.5,315.2 722.6,315.3 722.9,340.0 723.0,340.0 723.4,330.7 723.5,326.1 723.7,320.8 724.2,329.4 724.5,319.9 724.5,319.4 724.8,323.6 725.2,315.2 725.5,320.9 725.5,327.3 725.7,340.0 726.0,334.3 726.4,340.0 726.5,340.0 726.8,322.1 727.1,331.1 727.5,340.0 727.5,335.4 727.9,320.2 728.1,318.7 728.4,327.5 728.7,316.9 728.9,340.0 729.0,336.4 729.2,324.3 729.7,324.1 729.9,340.0 730.1,336.9 730.3,340.0 730.7,339.8 731.0,324.8 731.0,324.6 731.5,331.6 731.7,340.0 732.0,325.5 732.1,326.9 732.2,340.0 732.7,340.0 733.0,320.2 733.1,319.3 733.4,340.0 733.6,323.4 734.0,340.0 734.0,340.0 734.3,324.7 734.7,331.5 734.8,337.1 735.2,337.7 735.5,325.1 735.6,325.4 735.8,339.4 736.0,331.8 736.3,340.0 736.6,340.0 737.0,319.1 737.0,319.4 737.3,340.0 737.7,340.0 737.9,326.8 738.0,326.0 738.2,322.9 738.6,325.3 738.9,320.3 739.0,323.1 739.3,331.9 739.5,328.7 739.9,340.0 740.2,322.2 740.5,328.1 740.7,333.7 741.0,322.1 741.0,322.5 741.2,327.4 741.7,320.1 742.0,328.0 742.0,331.2 742.5,340.0 742.5,338.0 742.7,322.9 743.1,340.0 743.5,320.2 743.6,317.2 743.9,340.0 744.0,324.2 744.3,311.9 744.5,319.9 745.0,337.6 745.0,340.0 745.4,333.1 745.6,340.0 745.9,327.3 746.3,340.0 746.5,330.5 746.7,340.0 747.0,322.6 747.3,320.8 747.5,331.0 747.5,340.0 748.0,315.4 748.0,315.1 748.3,332.6 748.6,323.6 748.7,340.0 749.0,326.0 749.4,340.0 749.8,333.6 750.0,340.0 750.0,340.0 750.3,325.7 750.6,340.0 750.9,326.0 751.2,340.0 751.5,328.3 751.7,315.3 751.9,329.9 752.0,325.3 752.3,317.3 752.5,320.7 753.0,340.0 753.0,340.0 753.3,319.2 753.8,321.0 754.0,340.0 754.0,340.0 754.4,321.9 754.6,324.2 754.8,340.0 755.1,316.3 755.4,340.0 755.7,318.5 755.9,335.6 756.1,310.1 756.4,332.3 756.5,322.4 756.9,314.3 757.2,340.0 757.4,316.7 757.6,321.5 758.0,312.5 758.0,312.1 758.3,332.9 758.6,314.9 759.0,328.5 759.0,327.6 759.4,320.5 759.9,319.1 760.0,331.9 760.1,340.0 760.5,323.3 760.5,320.7 760.9,313.8 761.0,317.5 761.2,340.0 761.6,317.0 761.8,340.0 762.1,340.0 762.4,313.2 762.6,312.1 762.7,329.5 763.1,334.0 763.2,317.9 763.8,316.5 764.0,337.9 764.0,340.0 764.4,307.7 764.8,310.5 765.0,340.0 765.0,326.1 765.2,309.1 765.6,340.0 765.8,305.9 766.1,322.5 766.3,298.4 766.5,309.7 767.0,340.0 767.0,334.8 767.4,301.4 767.5,310.8 768.0,340.0 768.0,340.0 768.4,298.9 768.5,306.5 769.0,321.9 769.1,340.0 769.4,311.7 769.6,325.1 769.9,301.9 770.2,327.3 770.5,297.0 770.7,319.6 770.9,293.4 771.0,299.2 771.3,323.0 771.5,305.7 771.9,292.9 772.1,316.7 772.2,299.0 772.8,294.0 773.0,320.7 773.3,300.5 773.5,333.8 773.7,317.2 773.9,293.9 774.0,294.6 774.4,318.8 774.7,290.7 774.9,333.7 775.0,321.2 775.3,298.2 775.7,287.1 776.0,319.5 776.2,308.1 776.5,296.5 776.6,301.3 776.8,315.2 777.0,340.0 777.2,288.2 777.5,320.1 777.6,292.4 778.0,297.2 778.4,325.3 778.7,337.1 779.0,292.8 779.0,291.5 779.2,287.2 779.7,322.5 779.9,288.8 780.0,320.1 780.5,294.2 780.6,290.3 781.0,319.3 781.0,340.0 781.4,295.3 781.6,301.6 781.9,340.0 782.1,298.0 782.5,326.8 782.5,327.2 782.7,307.9 783.1,339.9 783.5,300.9 783.6,294.8 783.8,316.0 784.1,321.7 784.3,298.3 784.8,303.0 785.0,324.3 785.4,335.6 785.5,306.1 785.5,306.3 785.6,320.6 786.1,305.8 786.3,340.0 786.5,340.0 786.8,304.1 787.1,324.3 787.5,299.5 787.6,299.8 787.9,315.3 788.1,305.1 788.4,340.0 788.5,314.5 788.9,294.6 789.3,298.6 789.4,340.0 789.6,329.0 790.0,313.2 790.3,340.0 790.4,304.8 790.5,314.9 790.8,335.0 791.1,313.5 791.4,322.9 791.7,340.0 791.8,307.6 792.0,320.9 792.3,305.9 792.7,308.9 792.8,340.0 793.2,338.8 793.3,316.1 793.5,328.3 793.7,307.7 794.3,321.6 794.5,340.0 794.7,340.0 794.8,312.7 795.3,340.0 795.5,317.0 795.7,310.5 795.9,333.5 796.2,340.0 796.4,311.3 796.7,317.0 796.8,337.6 797.2,340.0 797.3,316.4 797.5,340.0 797.7,310.5 798.0,340.0 798.3,323.1 798.5,318.8 798.8,340.0 799.0,331.5 799.1,316.3 799.6,340.0 799.9,327.9 800.1,321.3 800.2,338.0 800.6,321.2 800.7,340.0 801.1,340.0 801.2,319.7 801.6,316.1 801.9,333.1 802.3,340.0 802.4,317.4 802.6,340.0 802.7,317.8 803.1,340.0 803.4,320.7 803.5,321.8 803.9,340.0 804.0,323.5 804.2,340.0 804.7,324.7 804.8,340.0 805.1,340.0 805.2,326.5 805.8,318.9 805.9,340.0 806.1,335.4 806.5,315.2 806.5,314.2 807.0,340.0 807.2,319.4 807.4,340.0 807.8,318.5 808.0,340.0 808.1,316.5 808.3,340.0 808.5,339.9 809.0,318.1 809.0,317.9 809.2,340.0 809.6,340.0 809.8,315.5 810.2,320.7 810.2,340.0 810.7,340.0 811.0,313.8 811.0,315.8 811.2,339.2 811.6,340.0 811.8,320.3 812.1,323.3 812.4,340.0 812.9,340.0 813.0,321.5 813.3,340.0 813.4,316.5 813.7,340.0 813.8,314.0 814.1,324.0 814.3,337.3 814.8,340.0 814.9,320.4 815.1,340.0 815.2,316.9 815.5,320.6 815.8,340.0 816.3,340.0 816.4,317.6 816.5,340.0 816.6,323.0 817.4,317.6 817.5,340.0 817.6,322.4 817.7,340.0 818.1,340.0 818.4,290.4 818.6,340.0 818.7,319.2 819.1,340.0 819.2,318.7 819.5,340.0 819.7,316.0 820.0,322.3 820.2,340.0 820.6,340.0 820.9,316.6 821.1,324.8 821.4,340.0 821.7,340.0 821.8,320.3 822.1,340.0 822.4,324.8 822.6,315.0 822.7,340.0 823.2,323.0 823.3,340.0 823.5,340.0 823.8,321.5 824.2,340.0 824.3,318.5 824.6,340.0 824.7,320.9 825.1,322.7 825.2,338.3 825.7,333.8 825.8,320.8 826.3,340.0 826.3,315.9 826.9,320.3 827.0,340.0 827.2,319.3 827.4,340.0 827.6,319.6 827.7,340.0 828.3,318.1 828.5,340.0 828.6,316.0 828.7,340.0 829.0,340.0 829.3,313.9 829.7,340.0 829.9,324.3 830.1,315.0 830.2,340.0 830.8,319.7 830.9,340.0 831.1,320.3 831.2,340.0 831.8,318.6 832.0,340.0 832.2,340.0 832.5,318.4 832.5,319.4 832.9,340.0 833.3,317.2 833.3,340.0 833.8,340.0 834.0,321.4 834.3,340.0 834.4,325.1 834.7,317.4 835.0,340.0 835.2,320.1 835.4,340.0 835.8,340.0 835.9,321.2 836.1,340.0 836.4,315.8 836.8,320.8 836.9,340.0 837.4,319.3 837.4,340.0 837.6,340.0 838.0,320.6 838.1,316.6 838.2,340.0 838.5,317.3 838.8,340.0 839.1,315.3 839.4,340.0 839.6,340.0 839.8,322.0 840.3,340.0 840.4,317.1 840.9,340.0 841.0,315.8 841.2,321.2 841.5,340.0 841.5,340.0 841.9,318.5 842.1,340.0 842.2,321.8 842.7,313.4 842.9,340.0 843.1,315.5 843.3,340.0 843.9,319.1 844.0,340.0 844.3,340.0 844.5,319.8 844.5,324.3 844.9,340.0 845.2,317.9 845.4,340.0 845.5,340.0 845.9,316.0 846.2,323.8 846.3,340.0 846.8,340.0 846.9,315.6 847.1,340.0 847.2,321.1 847.7,340.0 847.8,319.5 848.3,317.6 848.4,340.0 848.6,340.0 848.9,319.5 849.1,320.9 849.4,340.0 849.6,325.8 849.8,340.0 850.0,340.0 850.1,322.1 850.9,340.0 851.0,316.6 851.2,320.4 851.5,340.0 851.7,319.9 851.8,340.0 852.2,312.9 852.5,340.0 852.7,340.0 853.0,315.5 853.0,314.7 853.1,340.0 853.5,319.1 853.8,340.0 854.1,317.9 854.2,340.0 854.7,340.0 854.8,313.2 855.1,320.9 855.3,340.0 855.5,340.0 855.6,313.5 856.1,340.0 856.4,317.9 856.5,340.0 856.6,322.5 857.1,315.9 857.3,340.0 857.6,315.0 857.7,340.0 858.2,319.5 858.3,340.0 858.7,318.5 858.8,340.0 859.2,340.0 859.5,316.1 859.6,340.0 860.0,318.0 860.1,317.4 860.4,340.0 860.5,318.6 860.8,340.0 861.1,340.0 861.3,317.9 861.6,340.0 861.7,317.2 862.1,340.0 862.3,316.2 862.6,318.6 862.7,340.0 863.3,322.1 863.4,340.0 863.7,319.3 863.8,340.0 864.1,323.4 864.3,340.0 864.7,340.0 865.0,315.0 865.1,340.0 865.3,316.9 865.6,316.1 865.7,340.0 866.1,316.7 866.3,340.0 866.6,319.6 866.7,340.0 867.3,323.5 867.5,340.0 867.7,340.0 868.0,316.4 868.1,340.0 868.2,316.7 868.9,318.4 868.9,340.0 869.4,340.0 869.5,319.2 869.5,317.9 870.0,340.0 870.1,340.0 870.2,315.2 870.8,340.0 870.8,314.2 871.2,319.9 871.4,340.0 871.9,315.4 871.9,340.0 872.2,340.0 872.4,320.6 872.7,340.0 872.7,320.7 873.1,318.9 873.3,340.0 873.8,318.1 873.8,340.0 874.4,340.0 874.5,315.7 874.5,316.1 874.7,340.0 875.3,340.0 875.3,321.3 875.7,340.0 875.7,320.1 876.0,340.0 876.3,316.5 876.7,340.0 876.9,318.0 877.1,318.2 877.3,340.0 877.5,340.0 877.6,318.8 878.2,320.4 878.3,340.0 878.6,340.0 878.8,320.7 879.2,340.0 879.4,319.3 879.7,340.0 879.9,318.0 880.2,340.0 880.5,318.2 880.5,314.6 880.7,340.0 881.4,316.8 881.4,340.0 881.6,314.2 881.9,340.0 882.1,340.0 882.5,318.5 882.5,316.0 882.7,340.0 883.1,322.9 883.4,340.0 883.6,340.0 883.8,317.0 884.1,314.2 884.3,340.0 884.7,340.0 884.8,313.2 885.2,340.0 885.5,319.4 885.5,313.8 885.6,340.0 886.2,318.4 886.3,340.0 886.6,340.0 886.7,318.5 887.2,318.7 887.5,340.0 887.5,340.0 887.8,319.4 888.2,320.4 888.5,340.0 888.8,315.4 888.8,340.0 889.4,340.0 889.4,318.4 889.7,340.0 890.0,315.2 890.1,316.4 890.5,340.0 890.8,321.0 891.0,340.0 891.2,340.0 891.5,319.3 891.9,340.0 892.0,319.2 892.0,320.1 892.3,340.0 892.6,340.0 892.8,317.2 893.2,315.2 893.4,340.0 893.6,340.0 893.9,315.2 894.0,340.0 894.2,318.0 894.5,340.0 894.7,316.4 895.2,319.2 895.3,340.0 895.6,340.0 896.0,315.4 896.0,312.8 896.3,340.0 896.6,340.0 896.8,321.2 897.2,340.0 897.4,316.2 897.7,318.6 897.8,340.0 898.3,340.0 898.3,314.3 898.6,340.0 898.7,317.6 899.3,314.8 899.4,340.0 899.6,340.0 900.0,319.2 900.1,340.0 900.5,320.4 900.7,313.2 900.8,340.0 901.2,312.1 901.3,340.0 901.7,312.9 901.9,340.0 902.2,321.6 902.4,340.0 902.8,340.0 903.0,316.3 903.2,314.8 903.4,340.0 903.7,314.9 903.8,340.0 904.3,319.5 904.5,340.0 904.7,340.0 905.0,313.1 905.0,317.0 905.3,340.0 905.7,340.0 905.9,318.0 906.1,340.0 906.4,318.6 906.6,340.0 907.0,317.4 907.3,316.9 907.5,340.0 907.6,318.1 907.6,340.0 908.1,315.5 908.3,340.0 908.5,322.0 909.0,340.0 909.1,318.5 909.2,340.0 909.5,340.0 909.7,319.8 910.1,340.0 910.4,314.9 910.6,314.5 910.8,340.0 911.2,340.0 911.2,320.7 911.6,340.0 911.8,316.2 912.1,320.0 912.3,340.0 912.6,340.0 912.8,305.3 913.0,315.8 913.1,340.0 913.9,316.9 913.9,340.0 914.3,340.0 914.5,317.2 914.5,340.0 914.8,318.9 915.3,340.0 915.4,317.7 915.6,318.8 915.8,340.0 916.0,340.0 916.2,317.2 916.6,317.8 916.8,340.0 917.1,314.4 917.2,340.0 917.7,318.3 917.9,340.0 918.2,318.8 918.2,340.0 918.7,340.0 918.9,317.7 919.2,311.7 919.5,340.0 919.5,313.4 919.6,340.0 920.2,340.0 920.5,315.8 920.8,313.9 921.0,340.0 921.2,340.0 921.4,318.0 921.5,314.5 921.7,340.0 922.3,317.7 922.3,340.0 922.8,319.0 922.8,340.0 923.4,314.7 923.5,340.0 923.6,317.0 923.8,340.0 924.2,340.0 924.5,312.7 924.7,340.0 925.0,315.7 925.1,318.7 925.3,340.0 925.9,340.0 926.0,316.0 926.1,311.7 926.4,340.0 926.7,318.5 926.9,340.0 927.0,340.0 927.1,316.2 927.6,340.0 927.9,312.5 928.1,340.0 928.5,313.7 928.5,314.7 928.6,340.0 929.4,340.0 929.5,317.5 929.8,317.1 929.9,340.0 930.1,317.9 930.3,340.0 930.6,313.9 930.6,340.0 931.0,340.0 931.5,319.2 931.6,340.0 931.8,316.6 932.1,310.6 932.3,340.0 932.6,340.0 932.8,315.4 933.0,318.6 933.1,340.0 933.5,340.0 933.9,311.3 934.2,317.3 934.4,340.0 934.6,340.0 934.7,319.9 935.2,318.4 935.3,340.0 935.8,340.0 935.9,319.3 936.4,314.3 936.4,340.0 936.7,318.7 936.9,340.0 937.1,340.0 937.3,314.0 937.6,340.0 937.7,318.4 938.2,317.1 938.4,340.0 938.7,316.5 938.9,340.0 939.1,340.0 939.5,318.1 939.7,299.1 939.9,340.0 940.1,340.0 940.5,315.4 940.6,319.8 940.8,340.0 941.2,340.0 941.2,316.3 941.6,317.5 941.7,340.0 942.0,320.6 942.1,340.0 942.9,340.0 942.9,317.0 943.2,340.0 943.4,316.3 943.5,340.0 943.9,318.5 944.2,316.7 944.4,340.0 944.7,314.7 944.8,340.0 945.3,340.0 945.5,317.5 945.5,316.1 946.0,340.0 946.2,340.0 946.3,317.3 946.7,317.0 946.9,340.0 947.1,340.0 947.3,315.9 947.5,312.5 948.0,340.0 948.2,317.7 948.4,340.0 948.7,318.4 948.8,340.0 949.0,315.3 949.1,340.0 949.6,318.1 949.8,340.0 950.0,317.2 950.1,340.0 950.7,318.7 950.8,340.0 951.2,340.0 951.5,316.4 951.8,316.5 951.8,340.0 952.1,340.0 952.4,316.2 952.9,340.0 953.0,315.9 953.0,340.0 953.5,315.5 953.8,340.0 953.9,304.4 954.0,340.0 954.1,319.7 954.5,340.0 954.7,316.4 955.1,340.0 955.2,315.2 955.6,340.0 955.7,318.6 956.3,340.0 956.4,317.2 956.6,340.0 956.9,315.1 957.3,316.5 957.3,340.0 957.7,340.0 957.8,314.5 958.4,340.0 958.4,313.5 958.7,317.0 959.0,340.0 959.1,340.0 959.3,318.5 959.5,316.2 959.9,340.0" fill="none" stroke="#b82c3c" stroke-width="0.9" stroke-opacity="0.8"/></g></g>
</svg>
<div class="a" style="left:40px;top:11px;width:299px;height:41px;background:#000"></div>
<div class="a" style="left:58px;top:14px;font:26px/34px 'Liberation Sans', sans-serif;letter-spacing:0.45px;color:#fff;-webkit-text-stroke:0.45px #000;white-space:nowrap">Distortion A weighting</div>
<div class="a" style="left:40px;top:357px;width:919px;height:3px;background:linear-gradient(#bcbcbc,#8c8c8c)"></div>
<div class="a" style="left:40px;top:360px;width:919px;height:3px;background:#3a7484"></div>
<div class="a" style="left:40px;top:363px;width:919px;height:1.5px;background:#e6e0e0"></div>
<div class="a" style="left:40px;top:364.5px;width:919px;height:13.5px;background:#d6d6d6"></div>
<div class="a" style="left:40px;top:378px;width:919px;height:2px;background:#a8a8a8"></div>
<div class="a" style="left:40px;top:379px;width:919px;height:216px;background:#a6a6a6"></div>
<div class="a" style="left:41px;top:365.8px;width:8px;height:8.2px;background:#1f3c48"></div>
<div class="a" style="left:44.4px;top:366.8px;width:1.3px;height:6.2px;background:#e8f0f0"></div>
<div class="a" style="left:42px;top:369.3px;width:6px;height:1.3px;background:#e8f0f0"></div>
<div class="a" style="left:51px;top:364px;font:9.3px/15px 'Liberation Sans', sans-serif;color:#222;white-space:nowrap">Add Meter</div>
<div class="a" style="left:98.5px;top:369.5px;width:2px;height:2px;background:#333"></div>
<svg class="a" style="left:107px;top:365px" width="9" height="10" viewBox="0 0 9 10"><rect x="0.6" y="0.6" width="7.8" height="8.8" fill="#d4dde0" stroke="#2e4c58" stroke-width="1.2"/><path d="M3 5H8M6 3L8 5L6 7" fill="none" stroke="#2e4c58" stroke-width="1.2"/></svg>
<div class="a" style="left:118px;top:364px;font:8.6px/15px 'Liberation Sans', sans-serif;color:#222;white-space:nowrap">Save Meter Data</div>
<div class="a" style="left:190.5px;top:365.5px;width:8.5px;height:9px;background:#22404e"></div>
<svg class="a" style="left:192.5px;top:367px" width="6" height="6"><path d="M0.5 0L5 3L0.5 6Z" fill="#fff"/></svg>
<div class="a" style="left:201.5px;top:364px;font:8.8px/15px 'Liberation Sans', sans-serif;color:#222;white-space:nowrap">Regulate</div>
<div class="a" style="left:40px;top:379px;width:460px;height:106px;background:#d9e3e5;overflow:hidden">
<div class="a" style="left:0;top:0;width:460px;height:17px;background:#dae3e5"></div>
<div class="a" style="left:0;top:17px;width:460px;height:1px;background:#cfd6d8"></div>
<div class="a" style="left:4px;top:3.2px;font:bold 10.5px/14px 'Liberation Sans', sans-serif;color:#111;white-space:nowrap">RMS Level</div>
<div class="a" style="left:60.5px;top:1.5px;width:46.5px;height:15px;background:#fff;font:9px/15px 'Liberation Sans', sans-serif;color:#333;text-indent:2px">Vrms<span class="a" style="right:4px;top:7px;width:2px;height:2px;background:#333"></span></div>
<div class="a" style="left:108.5px;top:5px;width:8.5px;height:8px;background:#1f3a48"></div>
<div class="a" style="left:109.5px;top:6.5px;width:6.5px;height:5px;background:#c4ccd0"></div>
<div class="a" style="left:110.0px;top:8px;width:5.5px;height:1.5px;background:#50709a"></div>
<div class="a" style="left:119.5px;top:8.5px;width:2px;height:2px;background:#333"></div>
<div class="a" style="left:125.0px;top:5px;width:8.5px;height:8px;background:#1e3640"></div>
<div class="a" style="left:126.5px;top:6.2px;width:5.5px;height:5.5px;border-radius:50%;background:#fff"></div>
<div class="a" style="left:128.25px;top:7.95px;width:2px;height:2px;border-radius:50%;background:#1e3640"></div>
<svg class="a" style="left:437.1px;top:5.5px" width="7" height="7" viewBox="0 0 7 7"><path d="M2.6 0.7H0.7V6.3H6.3V4.4" fill="none" stroke="#1a3a80" stroke-width="1.4"/><path d="M2.5 4.5L5.6 1.4" fill="none" stroke="#1a3a80" stroke-width="1.3"/><circle cx="5.4" cy="1.6" r="1.4" fill="#0a2a70"/></svg>
<svg class="a" style="left:449.7px;top:5.5px" width="6" height="6" viewBox="0 0 6 6"><path d="M0.6 0.6L5.4 5.4M5.4 0.6L0.6 5.4" stroke="#1e2a30" stroke-width="1.4"/></svg>
<div class="a" style="left:4.8px;top:26.7px;font:20px/26px 'Liberation Sans', sans-serif;color:#1a1a1a;white-space:nowrap">Ch1</div>
<div class="a" style="left:4.8px;top:69.5px;font:20px/26px 'Liberation Sans', sans-serif;color:#1a1a1a;white-space:nowrap">Ch2</div>
<div class="a" style="left:0;top:60.2px;width:460px;height:1.4px;background:#bfc5c8"></div>
<svg class="a" style="left:109.39999999999999px;top:37px" width="8" height="8"><path d="M0 0H7.2L3.6 7.2Z" fill="#111"/></svg>
<svg class="a" style="left:109.39999999999999px;top:78.7px" width="8" height="8"><path d="M0 0H7.2L3.6 7.8Z" fill="#111"/></svg>
<div class="a" style="left:117.6px;top:19.9px;width:337.2px;height:83.6px;background:#000"></div>
<div class="a" style="left:0;top:22.4px;width:375.6px;text-align:right;font:22px/26px 'Liberation Sans', sans-serif;color:#30ff30;-webkit-text-stroke:0.25px #000;white-space:nowrap;transform:scaleX(0.92);transform-origin:375.6px 0">4.162</div><div class="a" style="left:402.8px;top:22.4px;font:22px/26px 'Liberation Sans', sans-serif;color:#30ff30;-webkit-text-stroke:0.25px #000;white-space:nowrap;transform:scaleX(0.92);transform-origin:0 0">Vrms</div><div class="a" style="left:0;top:76.0px;width:375.6px;text-align:right;font:22px/26px 'Liberation Sans', sans-serif;color:#30ff30;-webkit-text-stroke:0.25px #000;white-space:nowrap;transform:scaleX(0.92);transform-origin:375.6px 0">4.170</div><div class="a" style="left:402.8px;top:76.0px;font:22px/26px 'Liberation Sans', sans-serif;color:#30ff30;-webkit-text-stroke:0.25px #000;white-space:nowrap;transform:scaleX(0.92);transform-origin:0 0">Vrms</div><div class="a" style="left:117.6px;top:48.5px;width:337.2px;height:13.3px;background:#8c8c8c"></div><div class="a" style="left:117.6px;top:48.5px;width:337.2px;height:1.2px;background:#a8a8a8"></div><div class="a" style="left:117.6px;top:61.8px;width:337.2px;height:1.3px;background:#dcdcdc"></div><div class="a" style="left:117.6px;top:63.1px;width:337.2px;height:11.6px;background:#8c8c8c"></div><div class="a" style="left:117.6px;top:73.7px;width:337.2px;height:1px;background:#b4b4b4"></div><div class="a" style="left:117.6px;top:48.5px;width:251.4px;height:11.7px;background:#08f808"></div><div class="a" style="left:117.6px;top:53.2px;width:253.4px;height:1.8px;background:#000"></div><div class="a" style="left:117.6px;top:63.1px;width:251.4px;height:10.6px;background:#08f808"></div><div class="a" style="left:117.6px;top:67.4px;width:251.4px;height:1.5px;background:#000"></div></div><div class="a" style="left:502px;top:379px;width:457px;height:106px;background:#d9e3e5;overflow:hidden">
<div class="a" style="left:0;top:0;width:457px;height:17px;background:#dae3e5"></div>
<div class="a" style="left:0;top:17px;width:457px;height:1px;background:#cfd6d8"></div>
<div class="a" style="left:3px;top:3.2px;font:bold 10.5px/14px 'Liberation Sans', sans-serif;color:#111;white-space:nowrap">THD+N Ratio</div>
<div class="a" style="left:76.4px;top:1.5px;width:39.6px;height:15px;background:#fff;font:9px/15px 'Liberation Sans', sans-serif;color:#333;text-indent:2px">%<span class="a" style="right:4px;top:7px;width:2px;height:2px;background:#333"></span></div>
<div class="a" style="left:117.5px;top:5px;width:8.5px;height:8px;background:#1f3a48"></div>
<div class="a" style="left:118.5px;top:6.5px;width:6.5px;height:5px;background:#c4ccd0"></div>
<div class="a" style="left:119.0px;top:8px;width:5.5px;height:1.5px;background:#50709a"></div>
<div class="a" style="left:128.5px;top:8.5px;width:2px;height:2px;background:#333"></div>
<div class="a" style="left:134.0px;top:5px;width:8.5px;height:8px;background:#1e3640"></div>
<div class="a" style="left:135.5px;top:6.2px;width:5.5px;height:5.5px;border-radius:50%;background:#fff"></div>
<div class="a" style="left:137.25px;top:7.95px;width:2px;height:2px;border-radius:50%;background:#1e3640"></div>
<svg class="a" style="left:436.1px;top:5.5px" width="7" height="7" viewBox="0 0 7 7"><path d="M2.6 0.7H0.7V6.3H6.3V4.4" fill="none" stroke="#1a3a80" stroke-width="1.4"/><path d="M2.5 4.5L5.6 1.4" fill="none" stroke="#1a3a80" stroke-width="1.3"/><circle cx="5.4" cy="1.6" r="1.4" fill="#0a2a70"/></svg>
<svg class="a" style="left:448.7px;top:5.5px" width="6" height="6" viewBox="0 0 6 6"><path d="M0.6 0.6L5.4 5.4M5.4 0.6L0.6 5.4" stroke="#1e2a30" stroke-width="1.4"/></svg>
<div class="a" style="left:4.8px;top:26.7px;font:20px/26px 'Liberation Sans', sans-serif;color:#1a1a1a;white-space:nowrap">Ch1</div>
<div class="a" style="left:4.8px;top:69.5px;font:20px/26px 'Liberation Sans', sans-serif;color:#1a1a1a;white-space:nowrap">Ch2</div>
<div class="a" style="left:0;top:60.2px;width:457px;height:1.4px;background:#bfc5c8"></div>
<svg class="a" style="left:109.39999999999999px;top:37px" width="8" height="8"><path d="M0 0H7.2L3.6 7.2Z" fill="#111"/></svg>
<svg class="a" style="left:109.39999999999999px;top:78.7px" width="8" height="8"><path d="M0 0H7.2L3.6 7.8Z" fill="#111"/></svg>
<div class="a" style="left:117.6px;top:19.9px;width:337.0px;height:83.6px;background:#000"></div>
<div class="a" style="left:0;top:22.4px;width:417.3px;text-align:right;font:22px/26px 'Liberation Sans', sans-serif;color:#30ff30;-webkit-text-stroke:0.25px #000;white-space:nowrap;transform:scaleX(0.92);transform-origin:417.3px 0">0.000056</div><div class="a" style="left:433.6px;top:22.4px;font:22px/26px 'Liberation Sans', sans-serif;color:#30ff30;-webkit-text-stroke:0.25px #000;white-space:nowrap;transform:scaleX(0.92);transform-origin:0 0">%</div><div class="a" style="left:0;top:76.0px;width:417.3px;text-align:right;font:22px/26px 'Liberation Sans', sans-serif;color:#30ff30;-webkit-text-stroke:0.25px #000;white-space:nowrap;transform:scaleX(0.92);transform-origin:417.3px 0">0.000055</div><div class="a" style="left:433.6px;top:76.0px;font:22px/26px 'Liberation Sans', sans-serif;color:#30ff30;-webkit-text-stroke:0.25px #000;white-space:nowrap;transform:scaleX(0.92);transform-origin:0 0">%</div><div class="a" style="left:117.6px;top:48.5px;width:337.0px;height:13.3px;background:#8c8c8c"></div><div class="a" style="left:117.6px;top:48.5px;width:337.0px;height:1.2px;background:#a8a8a8"></div><div class="a" style="left:117.6px;top:61.8px;width:337.0px;height:1.3px;background:#dcdcdc"></div><div class="a" style="left:117.6px;top:63.1px;width:337.0px;height:11.6px;background:#8c8c8c"></div><div class="a" style="left:117.6px;top:73.7px;width:337.0px;height:1px;background:#b4b4b4"></div><div class="a" style="left:117.6px;top:53.2px;width:336.0px;height:1.8px;background:#000"></div><div class="a" style="left:117.6px;top:67.4px;width:336.0px;height:1.5px;background:#000"></div></div><div class="a" style="left:40px;top:488.5px;width:460px;height:106px;background:#d9e3e5;overflow:hidden">
<div class="a" style="left:0;top:0;width:460px;height:17px;background:#dae3e5"></div>
<div class="a" style="left:0;top:17px;width:460px;height:1px;background:#cfd6d8"></div>
<div class="a" style="left:4px;top:3.2px;font:bold 10.5px/14px 'Liberation Sans', sans-serif;color:#111;white-space:nowrap">Frequency</div>
<div class="a" style="left:59.8px;top:1.5px;width:39.6px;height:15px;background:#fff;font:9px/15px 'Liberation Sans', sans-serif;color:#333;text-indent:2px">Hz<span class="a" style="right:4px;top:7px;width:2px;height:2px;background:#333"></span></div>
<div class="a" style="left:100.9px;top:5px;width:8.5px;height:8px;background:#1f3a48"></div>
<div class="a" style="left:101.9px;top:6.5px;width:6.5px;height:5px;background:#c4ccd0"></div>
<div class="a" style="left:102.4px;top:8px;width:5.5px;height:1.5px;background:#50709a"></div>
<div class="a" style="left:111.9px;top:8.5px;width:2px;height:2px;background:#333"></div>
<div class="a" style="left:117.4px;top:5px;width:8.5px;height:8px;background:#1e3640"></div>
<div class="a" style="left:118.9px;top:6.2px;width:5.5px;height:5.5px;border-radius:50%;background:#fff"></div>
<div class="a" style="left:120.65px;top:7.95px;width:2px;height:2px;border-radius:50%;background:#1e3640"></div>
<svg class="a" style="left:437.1px;top:5.5px" width="7" height="7" viewBox="0 0 7 7"><path d="M2.6 0.7H0.7V6.3H6.3V4.4" fill="none" stroke="#1a3a80" stroke-width="1.4"/><path d="M2.5 4.5L5.6 1.4" fill="none" stroke="#1a3a80" stroke-width="1.3"/><circle cx="5.4" cy="1.6" r="1.4" fill="#0a2a70"/></svg>
<svg class="a" style="left:449.7px;top:5.5px" width="6" height="6" viewBox="0 0 6 6"><path d="M0.6 0.6L5.4 5.4M5.4 0.6L0.6 5.4" stroke="#1e2a30" stroke-width="1.4"/></svg>
<div class="a" style="left:4.8px;top:26.7px;font:20px/26px 'Liberation Sans', sans-serif;color:#1a1a1a;white-space:nowrap">Ch1</div>
<div class="a" style="left:4.8px;top:69.5px;font:20px/26px 'Liberation Sans', sans-serif;color:#1a1a1a;white-space:nowrap">Ch2</div>
<div class="a" style="left:0;top:60.2px;width:460px;height:1.4px;background:#bfc5c8"></div>
<svg class="a" style="left:109.39999999999999px;top:37px" width="8" height="8"><path d="M0 0H7.2L3.6 7.2Z" fill="#111"/></svg>
<svg class="a" style="left:109.39999999999999px;top:78.7px" width="8" height="8"><path d="M0 0H7.2L3.6 7.8Z" fill="#111"/></svg>
<div class="a" style="left:117.6px;top:19.9px;width:337.2px;height:83.6px;background:#000"></div>
<div class="a" style="left:0;top:22.4px;width:392.3px;text-align:right;font:22px/26px 'Liberation Sans', sans-serif;color:#30ff30;-webkit-text-stroke:0.25px #000;white-space:nowrap;transform:scaleX(0.92);transform-origin:392.3px 0">1.00000</div><div class="a" style="left:416px;top:22.4px;font:22px/26px 'Liberation Sans', sans-serif;color:#30ff30;-webkit-text-stroke:0.25px #000;white-space:nowrap;transform:scaleX(0.92);transform-origin:0 0">kHz</div><div class="a" style="left:0;top:76.0px;width:392.3px;text-align:right;font:22px/26px 'Liberation Sans', sans-serif;color:#30ff30;-webkit-text-stroke:0.25px #000;white-space:nowrap;transform:scaleX(0.92);transform-origin:392.3px 0">1.00000</div><div class="a" style="left:416px;top:76.0px;font:22px/26px 'Liberation Sans', sans-serif;color:#30ff30;-webkit-text-stroke:0.25px #000;white-space:nowrap;transform:scaleX(0.92);transform-origin:0 0">kHz</div><div class="a" style="left:117.6px;top:48.5px;width:337.2px;height:13.3px;background:#8c8c8c"></div><div class="a" style="left:117.6px;top:48.5px;width:337.2px;height:1.2px;background:#a8a8a8"></div><div class="a" style="left:117.6px;top:61.8px;width:337.2px;height:1.3px;background:#dcdcdc"></div><div class="a" style="left:117.6px;top:63.1px;width:337.2px;height:11.6px;background:#8c8c8c"></div><div class="a" style="left:117.6px;top:73.7px;width:337.2px;height:1px;background:#b4b4b4"></div><div class="a" style="left:117.6px;top:48.5px;width:191.4px;height:11.7px;background:#08f808"></div><div class="a" style="left:117.6px;top:53.2px;width:336.2px;height:1.8px;background:#000"></div><div class="a" style="left:117.6px;top:63.1px;width:191.4px;height:10.6px;background:#08f808"></div><div class="a" style="left:117.6px;top:67.4px;width:323.4px;height:1.5px;background:#000"></div></div><div class="a" style="left:502px;top:488.5px;width:457px;height:106px;background:#d9e3e5;overflow:hidden">
<div class="a" style="left:0;top:0;width:457px;height:17px;background:#dae3e5"></div>
<div class="a" style="left:0;top:17px;width:457px;height:1px;background:#cfd6d8"></div>
<div class="a" style="left:3px;top:3.2px;font:bold 10.5px/14px 'Liberation Sans', sans-serif;color:#111;white-space:nowrap">SINAD</div>
<div class="a" style="left:41px;top:1.5px;width:40px;height:15px;background:#fff;font:9px/15px 'Liberation Sans', sans-serif;color:#333;text-indent:2px">dB<span class="a" style="right:4px;top:7px;width:2px;height:2px;background:#333"></span></div>
<div class="a" style="left:82.5px;top:5px;width:8.5px;height:8px;background:#1f3a48"></div>
<div class="a" style="left:83.5px;top:6.5px;width:6.5px;height:5px;background:#c4ccd0"></div>
<div class="a" style="left:84.0px;top:8px;width:5.5px;height:1.5px;background:#50709a"></div>
<div class="a" style="left:93.5px;top:8.5px;width:2px;height:2px;background:#333"></div>
<div class="a" style="left:99.0px;top:5px;width:8.5px;height:8px;background:#1e3640"></div>
<div class="a" style="left:100.5px;top:6.2px;width:5.5px;height:5.5px;border-radius:50%;background:#fff"></div>
<div class="a" style="left:102.25px;top:7.95px;width:2px;height:2px;border-radius:50%;background:#1e3640"></div>
<svg class="a" style="left:436.1px;top:5.5px" width="7" height="7" viewBox="0 0 7 7"><path d="M2.6 0.7H0.7V6.3H6.3V4.4" fill="none" stroke="#1a3a80" stroke-width="1.4"/><path d="M2.5 4.5L5.6 1.4" fill="none" stroke="#1a3a80" stroke-width="1.3"/><circle cx="5.4" cy="1.6" r="1.4" fill="#0a2a70"/></svg>
<svg class="a" style="left:448.7px;top:5.5px" width="6" height="6" viewBox="0 0 6 6"><path d="M0.6 0.6L5.4 5.4M5.4 0.6L0.6 5.4" stroke="#1e2a30" stroke-width="1.4"/></svg>
<div class="a" style="left:4.8px;top:26.7px;font:20px/26px 'Liberation Sans', sans-serif;color:#1a1a1a;white-space:nowrap">Ch1</div>
<div class="a" style="left:4.8px;top:69.5px;font:20px/26px 'Liberation Sans', sans-serif;color:#1a1a1a;white-space:nowrap">Ch2</div>
<div class="a" style="left:0;top:60.2px;width:457px;height:1.4px;background:#bfc5c8"></div>
<svg class="a" style="left:109.39999999999999px;top:37px" width="8" height="8"><path d="M0 0H7.2L3.6 7.2Z" fill="#111"/></svg>
<svg class="a" style="left:109.39999999999999px;top:78.7px" width="8" height="8"><path d="M0 0H7.2L3.6 7.8Z" fill="#111"/></svg>
<div class="a" style="left:117.6px;top:19.9px;width:337.0px;height:83.6px;background:#000"></div>
<div class="a" style="left:0;top:22.4px;width:406px;text-align:right;font:22px/26px 'Liberation Sans', sans-serif;color:#30ff30;-webkit-text-stroke:0.25px #000;white-space:nowrap;transform:scaleX(0.92);transform-origin:406px 0">125.091</div><div class="a" style="left:425.4px;top:22.4px;font:22px/26px 'Liberation Sans', sans-serif;color:#30ff30;-webkit-text-stroke:0.25px #000;white-space:nowrap;transform:scaleX(0.92);transform-origin:0 0">dB</div><div class="a" style="left:0;top:76.0px;width:406px;text-align:right;font:22px/26px 'Liberation Sans', sans-serif;color:#30ff30;-webkit-text-stroke:0.25px #000;white-space:nowrap;transform:scaleX(0.92);transform-origin:406px 0">125.138</div><div class="a" style="left:425.4px;top:76.0px;font:22px/26px 'Liberation Sans', sans-serif;color:#30ff30;-webkit-text-stroke:0.25px #000;white-space:nowrap;transform:scaleX(0.92);transform-origin:0 0">dB</div><div class="a" style="left:117.6px;top:48.5px;width:337.0px;height:13.3px;background:#8c8c8c"></div><div class="a" style="left:117.6px;top:48.5px;width:337.0px;height:1.2px;background:#a8a8a8"></div><div class="a" style="left:117.6px;top:61.8px;width:337.0px;height:1.3px;background:#dcdcdc"></div><div class="a" style="left:117.6px;top:63.1px;width:337.0px;height:11.6px;background:#8c8c8c"></div><div class="a" style="left:117.6px;top:73.7px;width:337.0px;height:1px;background:#b4b4b4"></div><div class="a" style="left:117.6px;top:48.5px;width:337.0px;height:11.7px;background:#08f808"></div><div class="a" style="left:117.6px;top:53.2px;width:336.0px;height:1.8px;background:#000"></div><div class="a" style="left:117.6px;top:63.1px;width:337.0px;height:10.6px;background:#08f808"></div><div class="a" style="left:117.6px;top:67.4px;width:336.0px;height:1.5px;background:#000"></div></div>
<div class="a" style="left:40px;top:378px;width:919px;height:1.8px;background:#a8a8a8"></div>
</body></html>
